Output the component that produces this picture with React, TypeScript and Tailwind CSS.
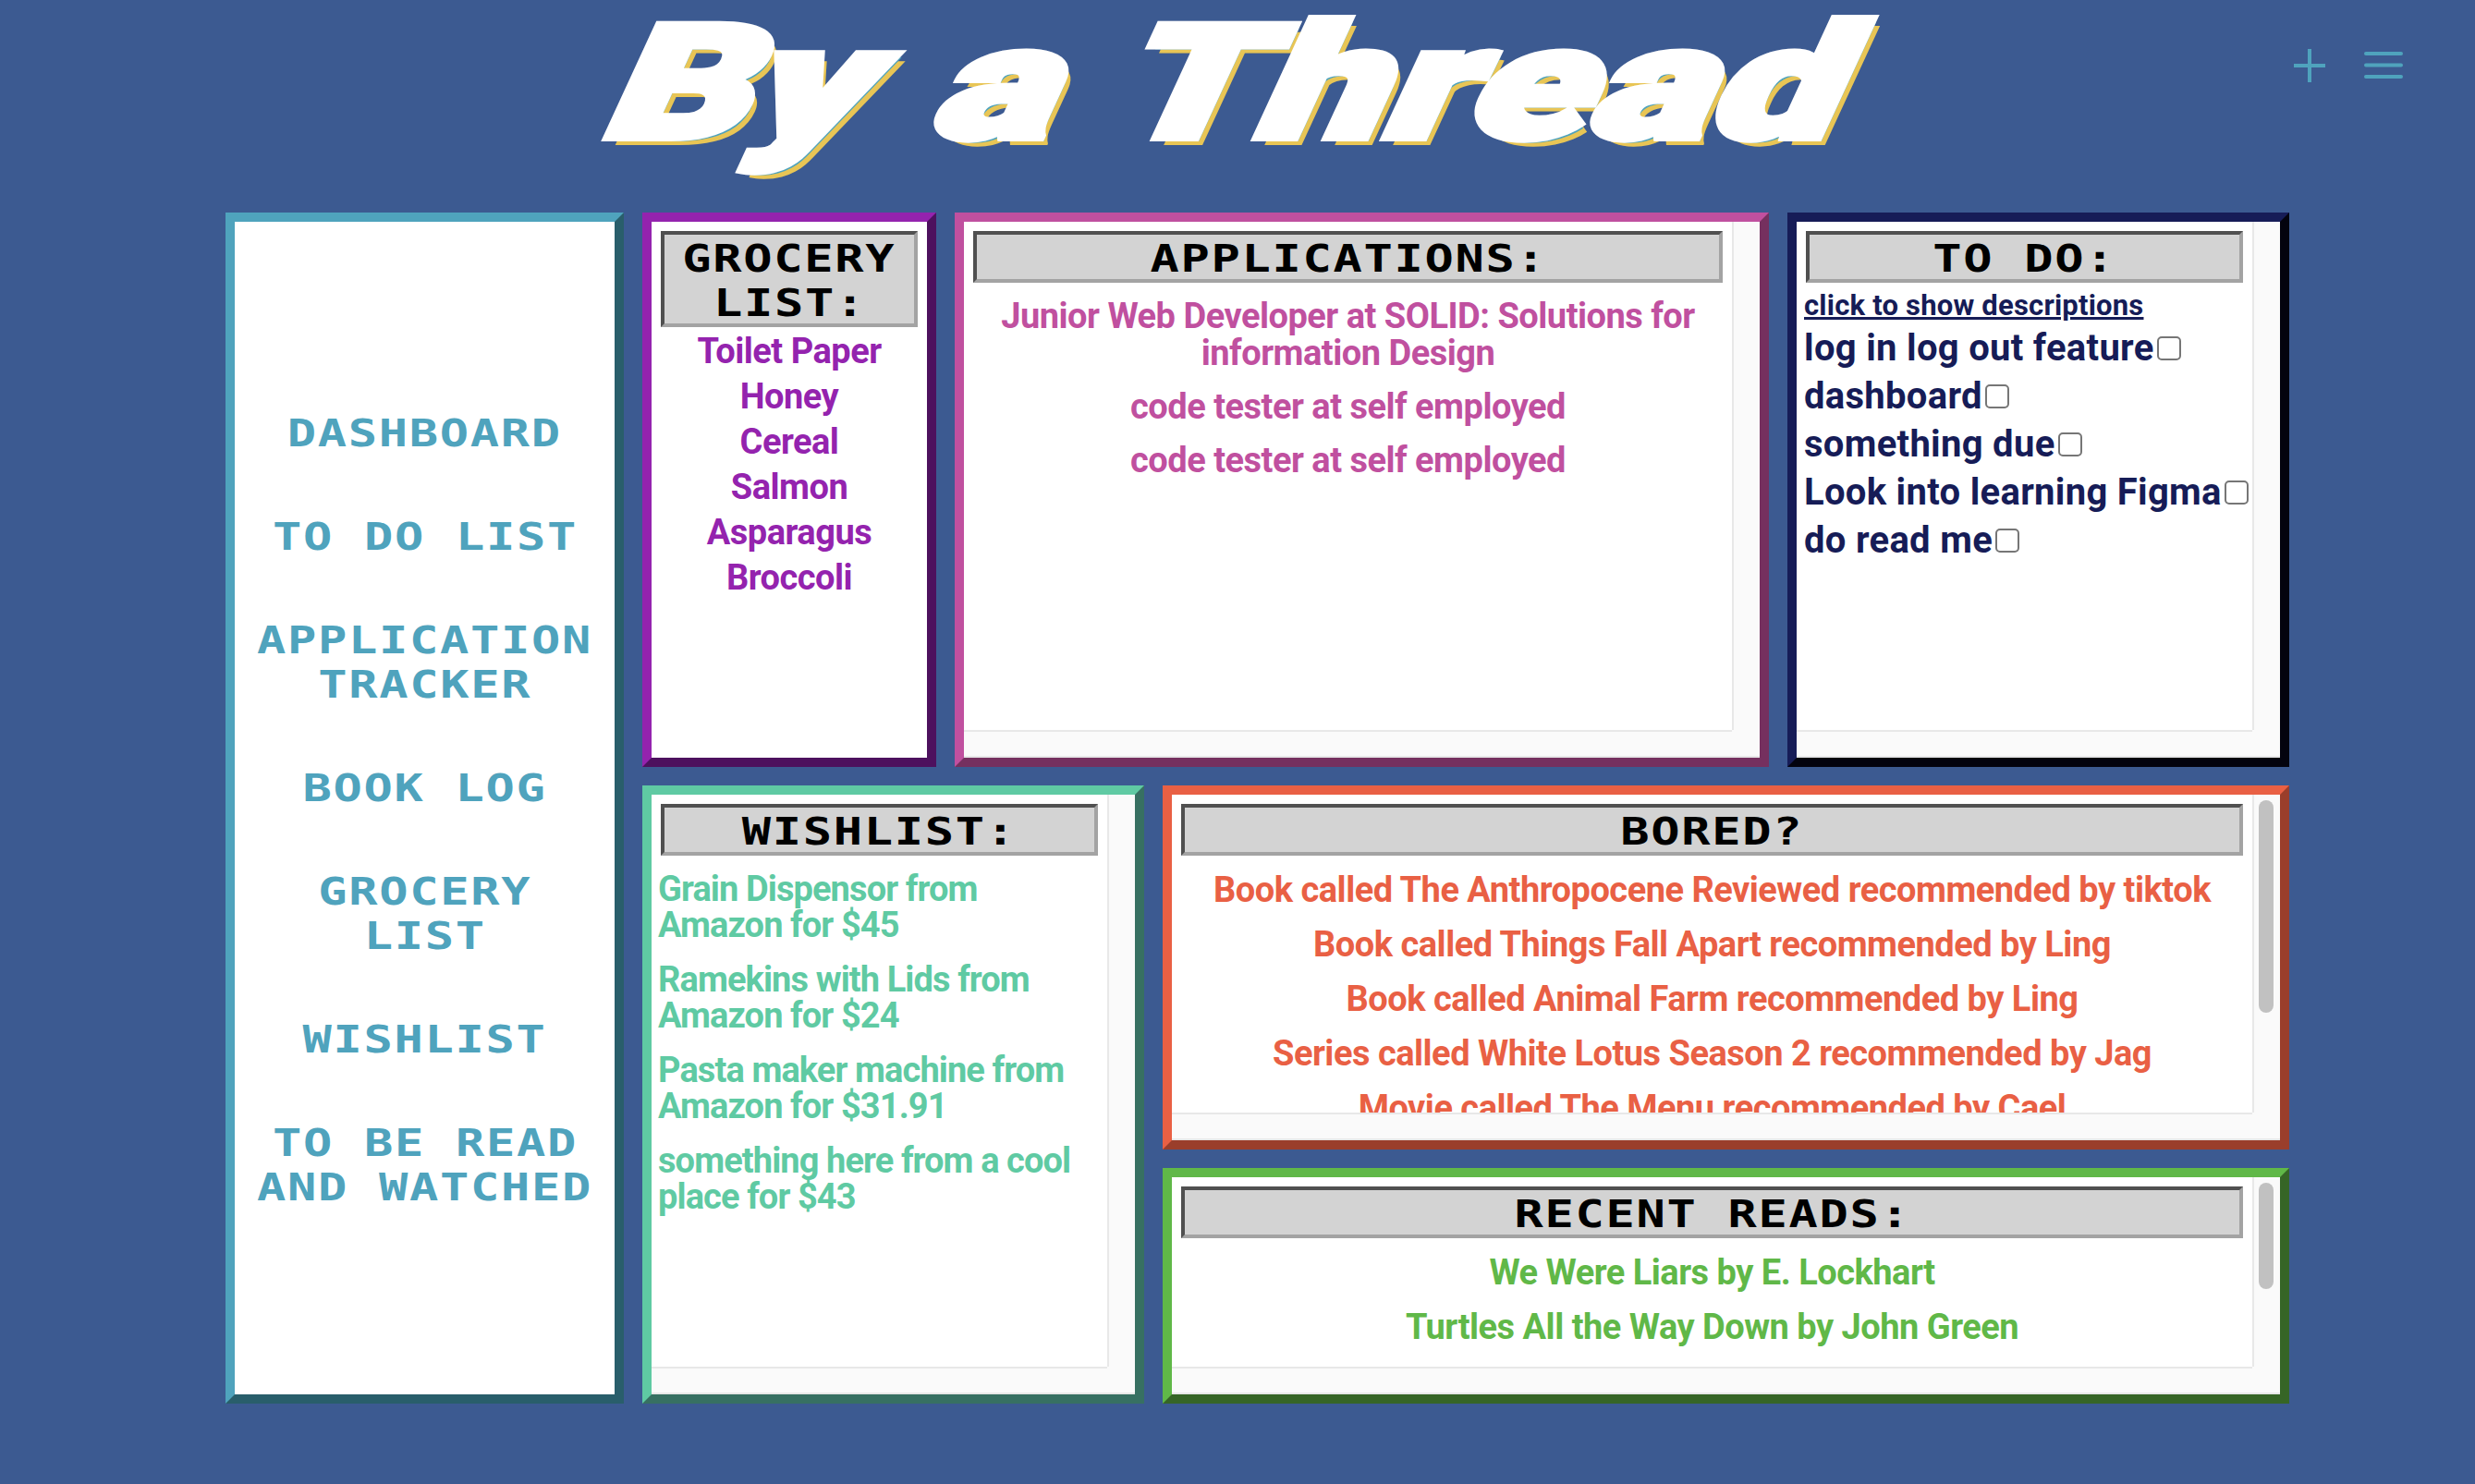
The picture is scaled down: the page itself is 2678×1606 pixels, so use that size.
const navItems = [
  ["DASHBOARD"],
  ["TO DO LIST"],
  ["APPLICATION", "TRACKER"],
  ["BOOK LOG"],
  ["GROCERY", "LIST"],
  ["WISHLIST"],
  ["TO BE READ", "AND WATCHED"],
]

const groceries = ["Toilet Paper", "Honey", "Cereal", "Salmon", "Asparagus", "Broccoli"]

const applications = [
  ["Junior Web Developer at SOLID: Solutions for", "information Design"],
  ["code tester at self employed"],
  ["code tester at self employed"],
]

const todos = ["log in log out feature", "dashboard", "something due", "Look into learning Figma", "do read me"]

const wishes = [
  ["Grain Dispensor from", "Amazon for $45"],
  ["Ramekins with Lids from", "Amazon for $24"],
  ["Pasta maker machine from", "Amazon for $31.91"],
  ["something here from a cool", "place for $43"],
]

const bored = [
  "Book called The Anthropocene Reviewed recommended by tiktok",
  "Book called Things Fall Apart recommended by Ling",
  "Book called Animal Farm recommended by Ling",
  "Series called White Lotus Season 2 recommended by Jag",
  "Movie called The Menu recommended by Cael",
]

const reads = ["We Were Liars by E. Lockhart", "Turtles All the Way Down by John Green"]

function PixelLine({ text }: { text: string }) {
  return (
    <span className="block text-center font-['DejaVu_Sans_Mono',monospace] text-[40px] leading-[48px] font-bold whitespace-pre">
      <span className="inline-block translate-y-[2px] scale-x-[1.3] tracking-[1.3px]">{text}</span>
    </span>
  )
}

function Heading({ lines }: { lines: string[] }) {
  return (
    <div className="border-4 border-t-[#505050] border-r-[#a3a3a3] border-b-[#a3a3a3] border-l-[#505050] bg-[#d3d3d3] text-black">
      {lines.map((l) => (
        <PixelLine key={l} text={l} />
      ))}
    </div>
  )
}

function Bars({ thumb, children }: { thumb: string; children: React.ReactNode }) {
  return (
    <div className="grid h-full grid-cols-[1fr_30px] grid-rows-[1fr_30px] bg-white">
      <div className="min-h-0 min-w-0 overflow-hidden">{children}</div>
      <div className="border-l-2 border-[#e8e8e8] bg-[#fafafa] pt-[6px] pl-[5px]">
        <div className={`w-4 rounded-full bg-[#c1c1c1] ${thumb}`} />
      </div>
      <div className="border-t-2 border-b-2 border-[#e8e8e8] bg-[#fafafa]" />
      <div className="border-b-2 border-[#e8e8e8] bg-[#fafafa]" />
    </div>
  )
}

export default function App() {
  return (
    <div className="h-[1606px] w-[2678px] overflow-hidden bg-[#3c5a91] font-['Roboto',sans-serif]">
      <header className="flex h-[230px] items-start">
        <div className="flex w-[2678px] items-start">
          <div className="flex-1" />
          <h1 className="mt-[4px] text-[172px] leading-[172px] font-black whitespace-nowrap text-white [-webkit-text-stroke:8px_white] [word-spacing:8px] [text-shadow:4.1px_4px_0_#4fa3bd,8.200px_8px_0_#e8c555] [transform:translateX(39px)_scaleX(1.42)_skewX(-18deg)]">
            By a Thread
          </h1>
          <div className="flex flex-1 items-center justify-end gap-[42px] pt-[53px] pr-[78px]">
            <svg width="34" height="36" viewBox="0 0 34 36" fill="none" stroke="#4fa3bd" strokeWidth="4">
              <path d="M17 0V36M0 18H34" />
            </svg>
            <svg width="42" height="30" viewBox="0 0 42 30" fill="none" stroke="#4fa3bd" strokeWidth="4" strokeLinecap="round">
              <path d="M2 2H40M2 14.500H40M2 27H40" />
            </svg>
          </div>
        </div>
      </header>

      <main className="ml-[244px] flex h-[1289px] w-[2233px] gap-5">
        <nav className="flex w-[431px] flex-col justify-center gap-[64px] border-[10px] border-t-[#4fa3bd] border-r-[#295e6b] border-b-[#295e6b] border-l-[#4fa3bd] bg-white text-[#4fa3bd]">
          {navItems.map((item) => (
            <a key={item[0]}>
              {item.map((l) => (
                <PixelLine key={l} text={l} />
              ))}
            </a>
          ))}
        </nav>

        <div className="flex w-[1782px] flex-col gap-5">
          <div className="flex h-[600px] gap-5">
            <section className="w-[318px] border-[10px] border-t-[#9423ae] border-r-[#4d115e] border-b-[#4d115e] border-l-[#9423ae] bg-white">
              <div className="px-[10px] pt-[10px]">
                <Heading lines={["GROCERY", "LIST:"]} />
              </div>
              <ul className="mt-[6px] flex flex-col gap-[9px] text-center text-[38px] leading-[40px] font-bold tracking-[-0.5px] text-[#9423ae]">
                {groceries.map((g) => (
                  <li key={g}>{g}</li>
                ))}
              </ul>
            </section>

            <section className="w-[881px] border-[10px] border-t-[#c0509f] border-r-[#75305f] border-b-[#75305f] border-l-[#c0509f]">
              <Bars thumb="hidden">
                <div className="px-[10px] pt-[10px]">
                  <Heading lines={["APPLICATIONS:"]} />
                </div>
                <div className="mt-4 flex flex-col gap-[18px] text-center text-[38px] leading-[40px] font-bold tracking-[-0.5px] text-[#c0509f]">
                  {applications.map((a, i) => (
                    <p key={i}>
                      {a.map((l) => (
                        <span key={l} className="block">
                          {l}
                        </span>
                      ))}
                    </p>
                  ))}
                </div>
              </Bars>
            </section>

            <section className="w-[543px] border-[10px] border-t-[#161c57] border-r-[#03030e] border-b-[#03030e] border-l-[#161c57]">
              <Bars thumb="hidden">
                <div className="px-[10px] pt-[10px]">
                  <Heading lines={["TO DO:"]} />
                </div>
                <div className="px-2 text-[#161c57]">
                  <a className="mt-[7px] block text-[31px] leading-[36px] font-bold tracking-[0.2px] underline">
                    click to show descriptions
                  </a>
                  <ul className="mt-[8px] flex flex-col gap-[12px] text-[40px] leading-[40px] font-bold tracking-[0.3px]">
                    {todos.map((t) => (
                      <li key={t} className="flex items-center whitespace-nowrap">
                        <span>{t}</span>
                        <input
                          type="checkbox"
                          className="ml-[3px] h-[26px] w-[26px] shrink-0 appearance-none rounded-[5px] border-2 border-[#767676] bg-white"
                        />
                      </li>
                    ))}
                  </ul>
                </div>
              </Bars>
            </section>
          </div>

          <div className="flex h-[669px] gap-5">
            <section className="w-[543px] border-[10px] border-t-[#5fcaa3] border-r-[#377062] border-b-[#377062] border-l-[#5fcaa3]">
              <Bars thumb="hidden">
                <div className="px-[10px] pt-[10px]">
                  <Heading lines={["WISHLIST:"]} />
                </div>
                <div className="mt-[17px] flex flex-col gap-[20px] pl-[7px] text-[38px] leading-[39px] font-bold tracking-[-0.9px] text-[#5fcaa3]">
                  {wishes.map((w) => (
                    <p key={w[0]}>
                      <span className="block">{w[0]}</span>
                      <span className="block">{w[1]}</span>
                    </p>
                  ))}
                </div>
              </Bars>
            </section>

            <div className="flex w-[1219px] flex-col gap-5">
              <section className="h-[394px] border-[10px] border-t-[#e96044] border-r-[#9a3e2b] border-b-[#9a3e2b] border-l-[#e96044]">
                <Bars thumb="h-[230px]">
                  <div className="px-[10px] pt-[10px]">
                    <Heading lines={["BORED?"]} />
                  </div>
                  <div className="mt-[17px] flex flex-col gap-[19px] text-center text-[38px] leading-[40px] font-bold tracking-[-0.5px] text-[#e96044]">
                    {bored.map((b) => (
                      <p key={b}>{b}</p>
                    ))}
                  </div>
                </Bars>
              </section>
              <section className="h-[255px] border-[10px] border-t-[#60b848] border-r-[#366526] border-b-[#366526] border-l-[#60b848]">
                <Bars thumb="h-[115px]">
                  <div className="px-[10px] pt-[10px]">
                    <Heading lines={["RECENT READS:"]} />
                  </div>
                  <div className="mt-[17px] flex flex-col gap-[19px] text-center text-[38px] leading-[40px] font-bold tracking-[-0.5px] text-[#60b848]">
                    {reads.map((r) => (
                      <p key={r}>{r}</p>
                    ))}
                  </div>
                </Bars>
              </section>
            </div>
          </div>
        </div>
      </main>
    </div>
  )
}
